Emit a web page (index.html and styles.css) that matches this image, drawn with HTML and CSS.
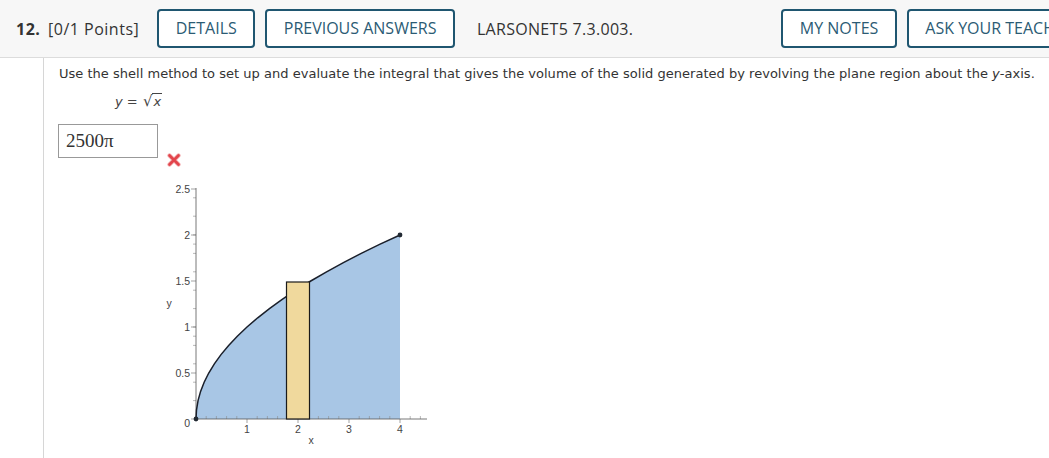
FILE: index.html
```html
<!DOCTYPE html>
<html>
<head>
<meta charset="utf-8">
<link rel="stylesheet" href="styles.css">
</head>
<body>
<div class="page">
  <header class="qhead">
    <div class="qnum"><b>12.</b> [0/1 Points]</div>
    <button class="btn btn-details">DETAILS</button>
    <button class="btn">PREVIOUS ANSWERS</button>
    <div class="qid">LARSONET5 7.3.003.</div>
    <div class="right">
      <button class="btn">MY NOTES</button>
      <button class="btn">ASK YOUR TEACHER</button>
    </div>
  </header>
  <main class="qbody">
    <p class="prompt">Use the shell method to set up and evaluate the integral that gives the volume of the solid generated by revolving the plane region about the <i>y</i>-axis.</p>
    <div class="equation"><i>y</i> = <span class="sqrt"><span class="rad">√</span><span class="radicand"><i>x</i></span></span></div>
    <div class="answer">2500π</div>
    <svg class="xmark" width="14" height="14" viewBox="0 0 14 14">
      <path d="M2.5 2.5 L11.5 11.5 M11.5 2.5 L2.5 11.5" stroke="#f2a9ab" stroke-width="4.2" stroke-linecap="round"/>
      <path d="M2.5 2.5 L11.5 11.5 M11.5 2.5 L2.5 11.5" stroke="#e2454c" stroke-width="2.6" stroke-linecap="round"/>
    </svg>
    <svg class="graph" width="290" height="280" viewBox="0 0 290 280">
      <path class="region" d="M47 243 L47.51 233.8 L49.04 224.6 L51.59 215.4 L55.16 206.2 L59.75 197 L65.36 187.8 L71.99 178.6 L79.64 169.4 L88.31 160.2 L98 151 L108.71 141.8 L120.44 132.6 L133.19 123.4 L146.96 114.2 L161.75 105 L177.56 95.8 L194.39 86.6 L212.24 77.4 L231.11 68.2 L251 59 L251 243 Z"/>
      <g class="minor">
        <path d="M44 224.6H47M44 206.2H47M44 187.8H47M44 169.4H47M44 132.6H47M44 114.2H47M44 95.8H47M44 77.4H47M44 40.2H47M44 21.8H47M44 151H47M44 58.9H47"/>
        <path d="M44 160.2H47M44 68.1H47"/>
        <path d="M57.2 243V240M67.4 243V240M77.6 243V240M87.8 243V240M108.2 243V240M118.4 243V240M128.6 243V240M138.8 243V240M159.2 243V240M169.4 243V240M179.6 243V240M189.8 243V240M210.2 243V240M220.4 243V240M230.6 243V240M240.8 243V240M261.2 243V240M271.4 243V240"/>
      </g>
      <g class="major">
        <path d="M42 243H47M42 197H47M42 151H47M42 105H47M42 59H47M42 13H47"/>
        <path d="M98 243V247M149 243V247M200 243V247M251 243V247"/>
      </g>
      <path class="axis" d="M47 12V243H278"/>
      <path class="curve" d="M47 243 L47.51 233.8 L49.04 224.6 L51.59 215.4 L55.16 206.2 L59.75 197 L65.36 187.8 L71.99 178.6 L79.64 169.4 L88.31 160.2 L98 151 L108.71 141.8 L120.44 132.6 L133.19 123.4 L146.96 114.2 L161.75 105 L177.56 95.8 L194.39 86.6 L212.24 77.4 L231.11 68.2 L251 59"/>
      <rect class="shell" x="137.5" y="106" width="23" height="137"/>
      <circle class="pt" cx="47" cy="243" r="2.4"/>
      <circle class="pt" cx="251" cy="59" r="2.4"/>
      <g class="lbl">
        <text x="41" y="17" text-anchor="end">2.5</text>
        <text x="41" y="63" text-anchor="end">2</text>
        <text x="41" y="109" text-anchor="end">1.5</text>
        <text x="41" y="155" text-anchor="end">1</text>
        <text x="41" y="201" text-anchor="end">0.5</text>
        <text x="41" y="251" text-anchor="end">0</text>
        <text x="98" y="257" text-anchor="middle">1</text>
        <text x="149" y="257" text-anchor="middle">2</text>
        <text x="200" y="257" text-anchor="middle">3</text>
        <text x="251" y="257" text-anchor="middle">4</text>
        <text x="20" y="131" text-anchor="middle">y</text>
        <text x="162" y="268" text-anchor="middle">x</text>
      </g>
    </svg>
  </main>
</div>
</body>
</html>
```
FILE: styles.css
```css
html, body {
  margin: 0;
  padding: 0;
  background: #ffffff;
}
body {
  width: 1049px;
  height: 458px;
  overflow: hidden;
}
.page {
  width: 1049px;
  height: 458px;
  display: flex;
  flex-direction: column;
}
.qhead {
  display: flex;
  align-items: center;
  height: 57px;
  border-bottom: 1px solid #dcdcdc;
  background: #f7f7f7;
  padding-left: 16px;
  font-family: "Open Sans", "Liberation Sans", sans-serif;
  font-size: 16px;
  color: #333333;
  white-space: nowrap;
  width: 1200px;
  flex-shrink: 0;
}
.qnum b {
  font-weight: 700;
  margin-right: 3px;
}
.qnum {
  margin-right: 18px;
  letter-spacing: 0.5px;
}
.btn {
  font-family: "Open Sans", "Liberation Sans", sans-serif;
  font-size: 16px;
  color: #2b5b74;
  background: #ffffff;
  border: 2px solid #1f5670;
  border-radius: 4px;
  height: 39px;
  padding: 0 16.5px;
  margin: 0;
  margin-right: 10px;
  line-height: 35px;
  cursor: pointer;
}
.qid {
  margin-left: 12px;
  letter-spacing: 0.3px;
}
.right {
  display: flex;
  margin-left: 148px;
}
.qbody {
  flex: 1;
  margin-left: 43px;
  border-left: 1px solid #d6d6d6;
  padding-left: 14px;
  font-family: "DejaVu Sans", Verdana, sans-serif;
  font-size: 13px;
  color: #333333;
  display: flex;
  flex-direction: column;
  align-items: flex-start;
}
.prompt {
  margin: 7px 0 0 1px;
  line-height: 18px;
  white-space: nowrap;
  letter-spacing: 0.02px;
}
.equation {
  margin: 9px 0 0 57px;
  color: #444444;
  line-height: 18px;
  white-space: nowrap;
}
.sqrt {
  display: inline-block;
  margin-left: 1px;
  white-space: nowrap;
}
.rad {
  font-size: 15px;
}
.radicand {
  border-top: 1px solid #444444;
  padding: 0 1px;
  display: inline-block;
  line-height: 15px;
}
.answer {
  margin-top: 13px;
  width: 91px;
  height: 32px;
  border: 1px solid #999999;
  padding-left: 7px;
  font-family: "Liberation Serif", "Times New Roman", serif;
  font-size: 19px;
  line-height: 32px;
  color: #333333;
}
.xmark {
  margin: -5px 0 0 109px;
  display: block;
}
.graph {
  display: block;
  margin: 9px 0 0 91px;
}
.region {
  fill: #a8c6e5;
}
.axis {
  fill: none;
  stroke: #555555;
  stroke-width: 0.8;
}
.minor path, .major path {
  stroke: #8a8a8a;
  stroke-width: 0.6;
  fill: none;
}
.major path {
  stroke: #666666;
}
.curve {
  fill: none;
  stroke: #1a1f2a;
  stroke-width: 1.5;
}
.shell {
  fill: #f0d99d;
  stroke: #1a1a1a;
  stroke-width: 1.2;
}
.pt {
  fill: #222a33;
}
.lbl text {
  font-family: "Liberation Sans", Arial, sans-serif;
  font-size: 10.5px;
  fill: #444444;
}
```
